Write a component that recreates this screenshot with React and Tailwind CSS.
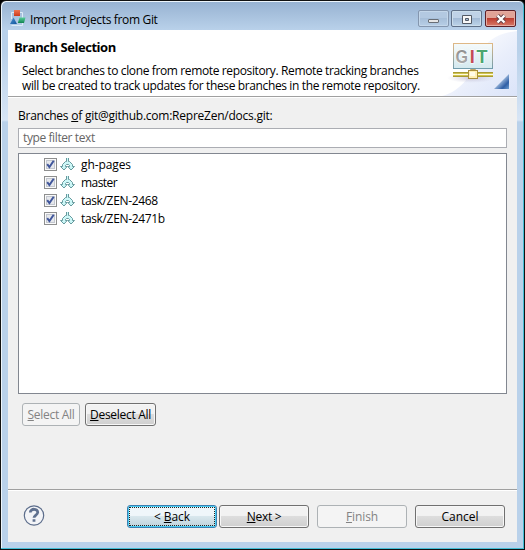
import React from "react";

const branches = [
  { name: "gh-pages", tracking: "tracking-[-0.1px]" },
  { name: "master", tracking: "tracking-[-0.55px]" },
  { name: "task/ZEN-2468", tracking: "tracking-[-0.35px]" },
  { name: "task/ZEN-2471b", tracking: "tracking-[-0.35px]" },
];

function AppIcon() {
  return (
    <svg width="16" height="16" viewBox="0 0 16 16" className="shrink-0">
      <defs>
        <linearGradient id="appRed" x1="0" y1="0" x2="0" y2="1"><stop stopColor="#ee7450" /><stop offset="1" stopColor="#cc3a1c" /></linearGradient>
        <linearGradient id="appBlue" x1="0" y1="0" x2="1" y2="1"><stop stopColor="#4a94d4" /><stop offset="1" stopColor="#14559c" /></linearGradient>
        <linearGradient id="appGreen" x1="0" y1="0" x2="0" y2="1"><stop stopColor="#58cf9c" /><stop offset="1" stopColor="#128450" /></linearGradient>
      </defs>
      <path d="M1.500 9V2.500H12.500V15.500H1.500" fill="none" stroke="#dcebf7" />
      <rect x="4" y="0" width="6" height="6" fill="url(#appRed)" />
      <path d="M0 14L3.500 7.500L7 14Z" fill="url(#appBlue)" />
      <path d="M9.500 7.500H15.500L14 13H7.800Z" fill="url(#appGreen)" />
    </svg>
  );
}

function GitBanner() {
  return (
    <svg width="75" height="66" viewBox="0 0 75 66" className="block shrink-0">
      <defs>
        <linearGradient id="sweep" x1="0" y1="0" x2="1" y2="1"><stop offset="0.15" stopColor="#ffffff" /><stop offset="0.6" stopColor="#e9eefb" /><stop offset="1" stopColor="#dbe4f9" /></linearGradient>
        <linearGradient id="screen" x1="0" y1="0" x2="0" y2="1"><stop stopColor="#f5fafb" /><stop offset="1" stopColor="#d4e9ef" /></linearGradient>
        <linearGradient id="screenEdge" x1="0" y1="0" x2="0" y2="1"><stop stopColor="#dfb886" /><stop offset="1" stopColor="#729cac" /></linearGradient>
        <linearGradient id="corner" x1="0" y1="0" x2="1" y2="1"><stop offset="0.4" stopColor="#b4cce8" /><stop offset="0.75" stopColor="#2f5fa6" /><stop offset="1" stopColor="#6f9fd0" /></linearGradient>
        <linearGradient id="letterG" x1="0" y1="0" x2="0" y2="1"><stop stopColor="#8a8a8a" /><stop offset="1" stopColor="#b2b2b2" /></linearGradient>
        <radialGradient id="haze"><stop stopColor="#b8b0c8" stopOpacity="0.7" /><stop offset="1" stopColor="#c8c8dc" stopOpacity="0" /></radialGradient>
      </defs>
      <path d="M0 66C20 61 31 43 38 24C45 9 58 3 75 1V66Z" fill="url(#sweep)" />
      <ellipse cx="29" cy="48" rx="24" ry="5" fill="url(#haze)" />
      <rect x="11.500" y="13.500" width="39" height="25" fill="url(#screen)" stroke="url(#screenEdge)" />
      <g fontFamily="Liberation Sans, sans-serif" fontWeight="700" fontSize="18" stroke="#fff" strokeWidth="1" paintOrder="stroke">
        <text x="13.500" y="33" fill="url(#letterG)" textLength="12.500" lengthAdjust="spacingAndGlyphs">G</text>
        <text x="27.800" y="33" fill="#c44c55">I</text>
        <text x="34.500" y="33" fill="#4ba66f">T</text>
      </g>
      <path d="M11 42.500H51M11 46.500H51" stroke="#a89a34" />
      <path d="M11 43.500H51M11 45.500H51" stroke="#d0c450" />
      <path d="M11 44.500H51" stroke="#fffbe0" />
      <path d="M28.500 41V39.500H33.500V41" fill="#fff" stroke="#bba66c" />
      <rect x="26.500" y="40.500" width="9" height="8" fill="#fff0b4" stroke="#a98f3d" />
      <rect x="28" y="42" width="5" height="4" fill="#fffbe8" />
      <path d="M52 59L67 44V59Z" fill="url(#corner)" />
    </svg>
  );
}

function CheckBox() {
  return (
    <svg width="13" height="13" viewBox="0 0 13 13" className="shrink-0">
      <rect x="0.500" y="0.500" width="12" height="12" fill="#fafafa" stroke="#8e8f8f" />
      <rect x="2.500" y="2.500" width="8" height="8" fill="#e6e8ec" stroke="#c3c7cf" />
      <path d="M3.200 6.200L5.400 9L9.700 2.800" fill="none" stroke="#40569b" strokeWidth="2" />
    </svg>
  );
}

function BranchIcon() {
  return (
    <svg width="15" height="14" viewBox="0 0 15 14" className="shrink-0">
      <path d="M6.500 1V4.500H5.500L2.500 7.500V9.500H0.500L4 13L7.200 9.500H5.500V8.500L6.500 7.500H8.500L9.500 8.500V9.500H7.800L11 13L14.500 9.500H12.500V7.500L9.500 4.500H8.500V1" fill="#cdf8f8" stroke="#66999d" />
    </svg>
  );
}

function Button({ children, className = "", variant = "normal" }) {
  const look =
    variant === "disabled"
      ? "border-[#adb2b5] bg-[#f4f4f4] text-[#838383]"
      : variant === "focus"
        ? "border-[#3c7fb1] bg-linear-to-b from-[#eff6fa] from-45% via-[#d8e7ed] via-50% to-[#bfd3dc] shadow-[inset_0_0_0_1px_#48cdf2]"
        : "border-[#707070] bg-linear-to-b from-[#f2f2f2] from-45% via-[#dddddd] via-50% to-[#cfcfcf] shadow-[inset_0_0_0_1px_#f7f7f7]";
  return (
    <button className={`relative h-[23px] shrink-0 rounded-[3px] border text-center leading-[21px] whitespace-nowrap ${look} ${className}`}>
      {variant === "focus" && <span className="absolute inset-[1px] border border-dotted border-[#232323]" />}
      {children}
    </button>
  );
}

function WindowButton({ kind }) {
  const look =
    kind === "close"
      ? "ml-px w-[31px] border-[#5d2027] bg-linear-to-b from-[#e1a397] from-45% via-[#bd3e31] via-50% to-[#d77868] shadow-[inset_0_0_0_1px_#e6aaa1]"
      : kind === "max"
        ? "w-[31px] border-[#5f7088] bg-linear-to-b from-[#bfd2e7] from-45% via-[#a3bbd6] via-50% to-[#bdd4ea] shadow-[inset_0_0_0_1px_#cbddeb]"
        : "w-[31px] border-[#8496ae] bg-linear-to-b from-[#b3c9e1] from-45% via-[#a7bfd9] via-50% to-[#b7cee6] shadow-[inset_0_0_0_1px_#c4d7ea]";
  return (
    <div className={`flex h-[17px] items-center justify-center rounded-[2px] border ${look}`}>
      <svg width="14" height="12" viewBox="0 0 14 12" className="shrink-0">
        {kind === "min" && <rect x="1.500" y="6.500" width="10" height="3" rx="0.500" fill="#e6e6e6" stroke="#686e76" />}
        {kind === "max" && <path d="M2.500 2.500H11.500V10.500H2.500ZM5.500 5.500H8.500V7.500H5.500Z" fill="#f7f7f7" fillRule="evenodd" stroke="#535a66" />}
        {kind === "close" && (
          <>
            <path d="M3.500 2.500L10.500 9.500M10.500 2.500L3.500 9.500" stroke="#624148" strokeWidth="4.200" />
            <path d="M3.500 2.500L10.500 9.500M10.500 2.500L3.500 9.500" stroke="#fff" strokeWidth="2.400" />
          </>
        )}
      </svg>
    </div>
  );
}

export default function App() {
  return (
    <div className="h-[550px] w-[525px] overflow-hidden bg-black font-['Open_Sans','Noto_Sans',sans-serif] text-[12px] text-black">
      <div className="flex h-full flex-col rounded-t-[6px] border border-[#111] bg-linear-to-b from-[#b9d1ea] from-[50px] via-[#d7e5f5] via-[119px] to-[#b9d1ea] to-[121px] px-[7px] pb-[7px] shadow-[inset_-1px_-1px_0_#42bdd5,inset_1px_1px_0_#edf5fb]">
        <header className="-mx-[6px] mt-px flex h-[28px] shrink-0 rounded-t-[5px] bg-linear-to-b from-[#98b3d2] to-[#b9d1ea] pr-[7px] pl-[8px]">
          <div className="pt-[8px]"><AppIcon /></div>
          <h1 className="ml-[4px] pt-[9px] leading-[18px] tracking-[-0.34px] whitespace-nowrap">Import Projects from Git</h1>
          <div className="ml-auto flex gap-[2px] pt-[8px]">
            <WindowButton kind="min" />
            <WindowButton kind="max" />
            <WindowButton kind="close" />
          </div>
        </header>
        <main className="flex min-h-0 flex-1 flex-col bg-[#f0f0f0]">
          <section className="flex h-[67px] shrink-0 border-b border-[#a0a0a0] bg-white">
            <div className="w-[434px] whitespace-nowrap">
              <h2 className="mt-[8px] ml-[6px] text-[13px] leading-[18px] font-bold tracking-[-0.45px]">Branch Selection</h2>
              <p className="mt-[7px] ml-[14px] leading-[15px] tracking-[-0.37px]">
                Select branches to clone from remote repository. Remote tracking branches
                <br />
                will be created to track updates for these branches in the remote repository.
              </p>
            </div>
            <GitBanner />
          </section>
          <section className="h-[392px] shrink-0 border-t border-white px-[10px]">
            <div className="mt-[9px] h-[21px] leading-[18px] tracking-[-0.24px] whitespace-nowrap">Branches <u>o</u>f git@github.com:RepreZen/docs.git:</div>
            <div className="h-[20px] border border-[#abadb3] bg-white pl-1 leading-[18px] tracking-[-0.4px] text-[#666]">type filter text</div>
            <div className="mt-[5px] h-[241px] border border-[#828790] bg-white pt-px pl-[25px]">
              {branches.map(({ name, tracking }) => (
                <div key={name} className="flex h-[18px] items-center">
                  <CheckBox />
                  <span className="ml-[3px]"><BranchIcon /></span>
                  <span className={`ml-[6px] pt-[2px] leading-[18px] ${tracking}`}>{name}</span>
                </div>
              ))}
            </div>
            <div className="mt-[9px] ml-[4px] flex gap-[5px]">
              <Button variant="disabled" className="w-[58px] tracking-[-0.3px]"><u>S</u>elect All</Button>
              <Button className="w-[71px] tracking-[-0.3px]"><u>D</u>eselect All</Button>
            </div>
          </section>
          <footer className="flex flex-1 border-t border-[#a0a0a0] pt-[15px] pl-[15px] shadow-[inset_0_1px_0_#fff]">
            <svg width="22" height="22" viewBox="0 0 22 22">
              <circle cx="11" cy="10.500" r="9.700" fill="#f3f4f7" stroke="#5c6d8b" strokeWidth="1.200" />
              <path d="M7.300 7.500C7.300 3.100 15 3.300 14.700 7.500C14.500 10 11 10.100 11 12.800M11 14.300V16.800" fill="none" stroke="#60718f" strokeWidth="2.800" />
            </svg>
            <Button variant="focus" className="ml-[82px] w-[90px] tracking-[-0.1px]">&lt; <u>B</u>ack</Button>
            <Button className="ml-[2px] w-[90px] tracking-[-0.3px]"><u>N</u>ext &gt;</Button>
            <Button variant="disabled" className="ml-[8px] w-[90px] tracking-[-0.1px]"><u>F</u>inish</Button>
            <Button className="ml-[8px] w-[90px]">Cancel</Button>
          </footer>
        </main>
      </div>
    </div>
  );
}
